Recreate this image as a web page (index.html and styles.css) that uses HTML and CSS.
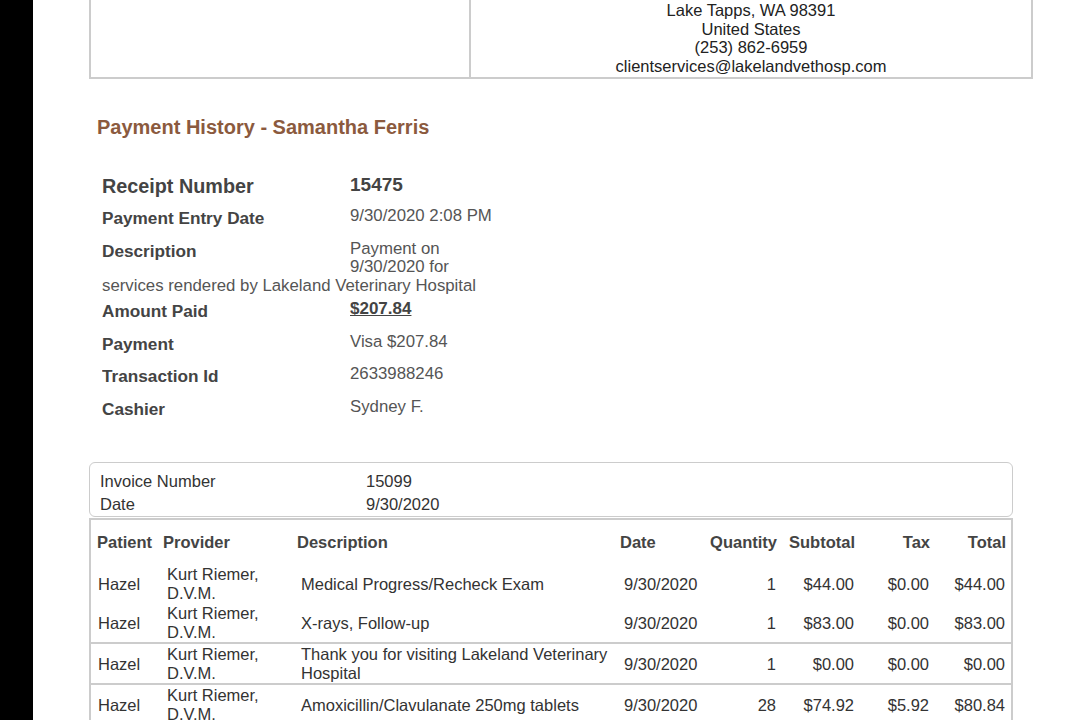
FILE: index.html
```html
<!DOCTYPE html>
<html lang="en">
<head>
  <meta charset="UTF-8">
  <meta name="viewport" content="width=device-width, initial-scale=1.0">
  <title>Payment History - Samantha Ferris</title>
  <link rel="stylesheet" href="styles.css">
</head>
<body>
  <div class="frame">
    <div class="edge"></div>

    <main class="page">
      <table class="clinic">
        <tr>
          <td class="clinic-logo"></td>
          <td class="clinic-address">
            Lake Tapps, WA 98391<br>
            United States<br>
            (253) 862-6959<br>
            clientservices@lakelandvethosp.com
          </td>
        </tr>
      </table>

      <h2 class="history-title">Payment History - Samantha Ferris</h2>

      <section class="receipt">
        <div class="receipt-row receipt-main">
          <span class="label">Receipt Number</span>
          <span class="value">15475</span>
        </div>
        <div class="receipt-row">
          <span class="label">Payment Entry Date</span>
          9/30/2020 2:08 PM
        </div>
        <div class="receipt-row receipt-desc">
          <span class="label">Description</span>
          Payment on 9/30/2020 for services rendered by Lakeland Veterinary Hospital
        </div>
        <div class="receipt-row">
          <span class="label">Amount Paid</span>
          <span class="amount">$207.84</span>
        </div>
        <div class="receipt-row">
          <span class="label">Payment</span>
          Visa $207.84
        </div>
        <div class="receipt-row">
          <span class="label">Transaction Id</span>
          2633988246
        </div>
        <div class="receipt-row">
          <span class="label">Cashier</span>
          Sydney F.
        </div>
      </section>

      <section class="invoice">
        <table class="invoice-head">
          <tr><td class="invoice-label">Invoice Number</td><td>15099</td></tr>
          <tr><td class="invoice-label">Date</td><td>9/30/2020</td></tr>
        </table>

        <table class="items">
          <colgroup>
            <col style="width:68px">
            <col style="width:134px">
            <col style="width:323px">
            <col style="width:89px">
            <col style="width:77px">
            <col style="width:78px">
            <col style="width:75px">
            <col style="width:76px">
          </colgroup>
          <thead>
            <tr>
              <th>Patient</th>
              <th>Provider</th>
              <th>Description</th>
              <th>Date</th>
              <th class="num">Quantity</th>
              <th class="num">Subtotal</th>
              <th class="num">Tax</th>
              <th class="num">Total</th>
            </tr>
          </thead>
          <tbody>
            <tr>
              <td>Hazel</td>
              <td>Kurt Riemer, D.V.M.</td>
              <td class="desc">Medical Progress/Recheck Exam</td>
              <td class="date">9/30/2020</td>
              <td class="num">1</td>
              <td class="num">$44.00</td>
              <td class="num">$0.00</td>
              <td class="num">$44.00</td>
            </tr>
            <tr>
              <td>Hazel</td>
              <td>Kurt Riemer, D.V.M.</td>
              <td class="desc">X-rays, Follow-up</td>
              <td class="date">9/30/2020</td>
              <td class="num">1</td>
              <td class="num">$83.00</td>
              <td class="num">$0.00</td>
              <td class="num">$83.00</td>
            </tr>
            <tr class="sep">
              <td>Hazel</td>
              <td>Kurt Riemer, D.V.M.</td>
              <td class="desc">Thank you for visiting Lakeland Veterinary Hospital</td>
              <td class="date">9/30/2020</td>
              <td class="num">1</td>
              <td class="num">$0.00</td>
              <td class="num">$0.00</td>
              <td class="num">$0.00</td>
            </tr>
            <tr class="sep">
              <td>Hazel</td>
              <td>Kurt Riemer, D.V.M.</td>
              <td class="desc">Amoxicillin/Clavulanate 250mg tablets</td>
              <td class="date">9/30/2020</td>
              <td class="num">28</td>
              <td class="num">$74.92</td>
              <td class="num">$5.92</td>
              <td class="num">$80.84</td>
            </tr>
          </tbody>
        </table>
      </section>
    </main>
  </div>
</body>
</html>
```

FILE: styles.css
```css
body {
  margin: 0;
  padding: 0;
  background: #fff;
  font-family: "Liberation Sans", Arial, sans-serif;
  color: #333;
}
.frame {
  display: flex;
  min-height: 100vh;
}
.edge {
  width: 33px;
  flex-shrink: 0;
  background: #000;
}
.page {
  flex: 1;
  padding: 0 47px 40px 56px;
}

/* clinic header */
.clinic {
  width: 944px;
  border-collapse: collapse;
}
.clinic td {
  border: 2px solid #ccc;
  border-top: 0;
  padding: 1px 0;
}
.clinic-logo {
  width: 378px;
}
.clinic-address {
  text-align: center;
  font-size: 16.5px;
  line-height: 18.7px;
  color: #222;
}

.history-title {
  margin: 36px 0 34px 8px;
  font-size: 20px;
  line-height: 24px;
  font-weight: bold;
  color: #8b5a3e;
}

/* receipt details */
.receipt {
  width: 400px;
  margin-left: 13px;
}
.receipt-row {
  overflow: hidden;
  padding-top: 2px;
  margin-bottom: 5px;
  font-size: 16.8px;
  line-height: 18.5px;
  color: #555;
}
.receipt-row.receipt-desc {
  margin-bottom: 3px;
}
.receipt-row .label {
  float: left;
  width: 248px;
  padding: 1px 0 4.5px;
  font-size: 17.2px;
  line-height: 20px;
  font-weight: bold;
  color: #444;
}
.receipt-main .label {
  font-size: 19.8px;
}
.receipt-main .value {
  font-size: 19px;
  line-height: 20px;
  font-weight: bold;
  color: #444;
}
.amount {
  font-weight: bold;
  font-size: 17px;
  color: #444;
  text-decoration: underline;
}

/* invoice */
.invoice {
  width: 924px;
  margin-top: 39px;
}
.invoice-head {
  width: 100%;
  border: 1px solid #ccc;
  border-radius: 6px;
  border-spacing: 0;
  padding: 7px 10px 0;
  font-size: 16.5px;
  line-height: 23px;
  color: #333;
}
.invoice-head td {
  padding: 0;
}
.invoice-label {
  width: 266px;
}

.items {
  width: 100%;
  table-layout: fixed;
  border-spacing: 0;
  border: 2px solid #ccc;
  border-bottom: 0;
  margin-top: 1px;
}
.items th {
  padding: 13px 5px 12px 4px;
  font-size: 16.5px;
  line-height: 19px;
  text-align: left;
  color: #444;
}
.items th:first-child {
  padding-left: 6px;
}
.items td {
  padding: 1px 6px 1px 8px;
  font-size: 16.5px;
  line-height: 18.5px;
  color: #333;
  vertical-align: middle;
}
.items td:first-child {
  padding-left: 7px;
}
.items td.desc {
  padding-right: 4px;
}
.items td.date {
  padding-right: 0;
}
.items .num {
  text-align: right;
}
.items .sep td {
  border-top: 2px solid #ccc;
}
```
